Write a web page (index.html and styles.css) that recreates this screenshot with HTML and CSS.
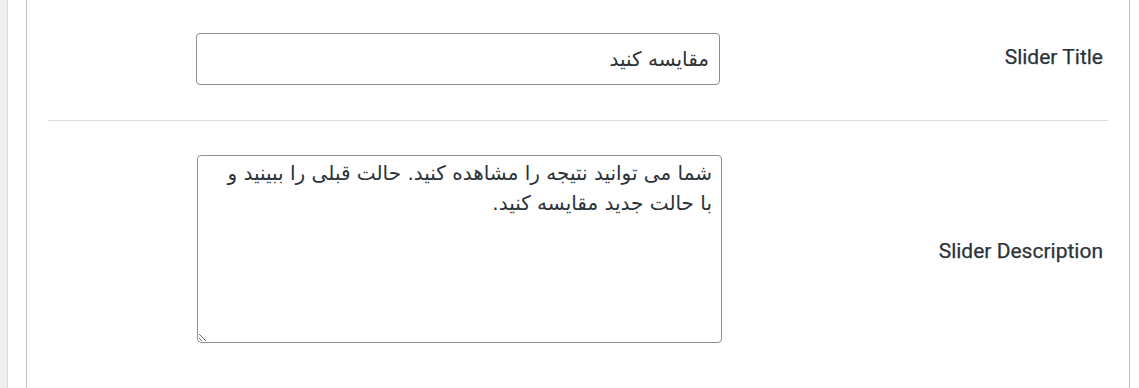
FILE: index.html
```html
<!DOCTYPE html>
<html lang="fa">
<head>
<meta charset="utf-8">
<title>Slider settings</title>
<link rel="stylesheet" href="styles.css">
</head>
<body>
<div class="layout">
  <div class="sidebar"></div>
  <div class="gap"></div>
  <main class="panel">
    <div class="form">
      <div class="row row-title">
        <label class="label" for="title">Slider Title</label>
        <div class="field">
          <input id="title" class="input" type="text" dir="rtl" value="مقایسه کنید">
        </div>
      </div>
      <div class="row row-desc">
        <label class="label" for="desc">Slider Description</label>
        <div class="field">
          <textarea id="desc" class="textarea" dir="rtl">شما می توانید نتیجه را مشاهده کنید. حالت قبلی را ببینید و با حالت جدید مقایسه کنید.</textarea>
        </div>
      </div>
    </div>
  </main>
</div>
</body>
</html>
```

FILE: styles.css
```css
html, body {
  margin: 0;
  padding: 0;
  background: #ffffff;
  height: 100%;
}

.layout {
  display: flex;
  height: 388px;
  overflow: hidden;
}

.sidebar {
  width: 7px;
  flex: none;
  background: #f0f0f1;
  border-right: 1px solid #dcdcde;
}

.gap {
  width: 18px;
  flex: none;
}

.panel {
  width: 1102px;
  flex: none;
  border-left: 1px solid #c3c4c7;
  border-right: 1px solid #c3c4c7;
  background: #ffffff;
}

.form {
  margin: 0 21px;
}

.row {
  display: flex;
  flex-direction: row-reverse;
  align-items: center;
}

.row-title {
  padding: 33px 0 35px;
  border-bottom: 1px solid #dcdcde;
}

.row-desc {
  padding: 34px 0 34px;
}

.label {
  width: 361px;
  padding-right: 5px;
  flex: none;
  text-align: right;
  font-family: Roboto, "Liberation Sans", sans-serif;
  font-weight: 400;
  font-size: 21px;
  color: #2c3338;
  -webkit-text-stroke: 0.25px #2c3338;
}

.row-title .label {
  margin-top: -4px;
}

.row-desc .label {
  margin-top: 3px;
}

.field {
  flex: none;
  width: 540px;
  display: flex;
  justify-content: flex-end;
  padding-right: 20px;
}

.input {
  box-sizing: border-box;
  width: 524px;
  height: 52px;
  margin: 0 2px 0 0;
  padding: 0 10px;
  border: 1px solid #8c8f94;
  border-radius: 4px;
  font-family: "DejaVu Sans", sans-serif;
  font-size: 20px;
  color: #2c3338;
  text-align: right;
  outline: none;
}

.textarea {
  box-sizing: border-box;
  width: 525px;
  height: 188px;
  margin: 0;
  padding: 2px 9px 2px 26px;
  border: 1px solid #8c8f94;
  border-radius: 4px;
  font-family: "DejaVu Sans", sans-serif;
  font-size: 20px;
  line-height: 30px;
  color: #2c3338;
  text-align: right;
  outline: none;
}
```
